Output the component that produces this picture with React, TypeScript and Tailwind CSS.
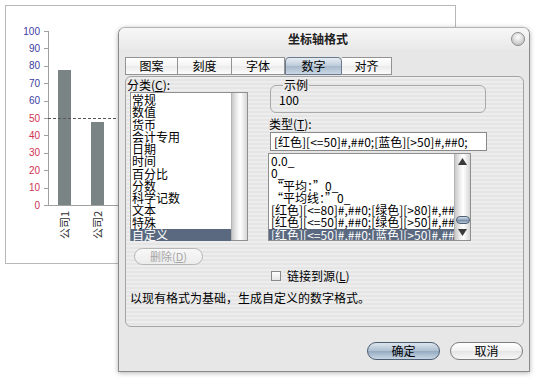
import React from "react";

const categories = ["常规", "数值", "货币", "会计专用", "日期", "时间", "百分比", "分数", "科学记数", "文本", "特殊", "自定义"];

const formats = [
  "0.0_",
  "0_",
  "“平均：”0_",
  "“平均线：”0_",
  "[红色][<=80]#,##0;[绿色][>80]#,##0;",
  "[红色][<=50]#,##0;[绿色][>50]#,##0;",
  "[红色][<=50]#,##0;[蓝色][>50]#,##0;",
];

const tabs = [
  { label: "图案", w: "w-[53px]" },
  { label: "刻度", w: "w-[54px]" },
  { label: "字体", w: "w-[53px]" },
  { label: "数字", w: "w-[57px]", active: true },
  { label: "对齐", w: "w-[50px]" },
];

function Chart() {
  const ticks = [100, 90, 80, 70, 60, 50, 40, 30, 20, 10, 0];
  // 坐标：页面坐标减去 6
  const y = (v: number) => 199 - v * 1.74;
  return (
    <svg width="449" height="257" className="block">
      <line x1="42.5" y1="25" x2="42.5" y2="199" stroke="#a0a0a0" />
      <line x1="42" y1="199.5" x2="130" y2="199.5" stroke="#a0a0a0" />
      {ticks.map((v) => (
        <g key={v}>
          <line x1="38" x2="42" y1={Math.round(y(v)) + 0.5} y2={Math.round(y(v)) + 0.5} stroke="#a0a0a0" />
          <text
            x="34"
            y={y(v) + 3.5}
            textAnchor="end"
            fontSize="10"
            fontFamily="'Liberation Sans', Arial, sans-serif"
            fill={v > 50 ? "#3c3ca2" : "#cf3352"}
          >
            {v}
          </text>
        </g>
      ))}
      <rect x="52" y="64" width="13" height="135" fill="#7b8484" />
      <rect x="85" y="116" width="13" height="83" fill="#7b8484" />
      <line x1="42" y1="112.5" x2="130" y2="112.5" stroke="#555" strokeDasharray="3 2" />
      <text
        transform="translate(63 205) rotate(-90)"
        textAnchor="end"
        fontSize="11"
        fontFamily="'Noto Sans CJK SC', sans-serif"
        fill="#333"
      >
        公司1
      </text>
      <text
        transform="translate(96 205) rotate(-90)"
        textAnchor="end"
        fontSize="11"
        fontFamily="'Noto Sans CJK SC', sans-serif"
        fill="#333"
      >
        公司2
      </text>
    </svg>
  );
}

function Track({ children }: { children?: React.ReactNode }) {
  return (
    <div className="w-[16px] h-full shrink-0 flex flex-col items-center border-l border-[#b4b4b4] bg-[linear-gradient(to_right,#c9c9c9,#efefef_35%,#ffffff_55%,#d6d6d6)]">
      {children}
    </div>
  );
}

export default function App() {
  return (
    <div className="relative w-[550px] h-[381px] overflow-hidden bg-white font-['Noto_Sans_CJK_SC',sans-serif] text-black">
      <div className="ml-[5px] mt-[5px] w-[451px] h-[259px] border border-[#b8b8b8] bg-white">
        <Chart />
      </div>

      <div className="absolute left-[118px] top-[27px] w-[412px] h-[345px] flex flex-col rounded-t-[7px] border border-[#8a8a8a] border-t-[#b4b4b4] bg-[#e7e7e7] shadow-[0_1px_5px_rgba(0,0,0,0.3)]">
        {/* 标题栏 */}
        <div className="h-[21px] flex items-center rounded-t-[6px] bg-[linear-gradient(to_bottom,#f7f7f7,#e9e9e9)]">
          <div className="flex-1 flex justify-center pl-[6px] text-[12px] leading-[14px] font-bold text-[#222]">坐标轴格式</div>
          <div className="mr-[4px] w-[14px] h-[14px] rounded-full border border-[#8c8c8c] bg-[radial-gradient(circle_at_50%_35%,#ffffff,#d2d2d2_60%,#b4b4b4)]" />
        </div>

        <div className="flex flex-col pl-[6px] pt-[8px]">
          {/* 选项卡 */}
          <div className="flex h-[18px] text-[12px] leading-[16px]">
            {tabs.map((t, i) =>
              t.active ? (
                <div
                  key={t.label}
                  className={`${t.w} flex items-center justify-center rounded-t-[4px] border border-[#6a7a8c] bg-[linear-gradient(to_bottom,#e6edf4,#bccad8_50%,#a6b8ca_51%,#cbd8e4)]`}
                >
                  {t.label}
                </div>
              ) : (
                <div
                  key={t.label}
                  className={`${t.w} flex items-center justify-center border-y border-r border-[#939393] ${i === 0 ? "border-l" : ""} bg-[linear-gradient(to_bottom,#ffffff,#f4f4f4_50%,#ebebeb_51%,#fbfbfb)]`}
                >
                  {t.label}
                </div>
              )
            )}
          </div>

          {/* 面板 */}
          <div className="mt-px w-[399px] h-[251px] flex flex-col rounded-[6px] border border-[#a4a4a4] bg-[repeating-linear-gradient(to_bottom,#ededed_0px,#ededed_2px,#e5e5e5_2px,#e5e5e5_4px)] text-[12px]">
            <div className="flex">
              {/* 分类 */}
              <div className="flex flex-col pl-[1px] pt-[1px] w-[122px]">
                <div className="leading-[13px]">
                  分类(<span className="underline">C</span>):
                </div>
                <div className="ml-[3px] mt-[1px] w-[118px] h-[149px] flex border border-[#8f8f8f] bg-white">
                  <div className="flex-1 flex flex-col pt-[1px]">
                    {categories.map((c, i) => (
                      <div
                        key={c}
                        className={`leading-[12.25px] h-[12.25px] pl-px whitespace-nowrap ${i === categories.length - 1 ? "bg-[#5a6980] text-white" : ""}`}
                      >
                        {c}
                      </div>
                    ))}
                  </div>
                  <Track />
                </div>
              </div>

              {/* 右侧 */}
              <div className="ml-[22px] flex flex-col">
                <fieldset className="mt-[2px] w-[216px] h-[34px] rounded-[6px] border border-[#a9a9a9] pl-[8px]">
                  <legend className="ml-[4px] px-px leading-[12px]">示例</legend>
                  <div className="leading-[13px] pt-[2px]">100</div>
                </fieldset>
                <div className="mt-[4px] -ml-[1px] leading-[13px]">
                  类型(<span className="underline">T</span>):
                </div>
                <div className="mt-[2px] w-[217px] h-[19px] pl-[3px] flex items-center border border-[#8a8a8a] bg-white whitespace-nowrap overflow-hidden">
                  [红色][&lt;=50]#,##0;[蓝色][&gt;50]#,##0;
                </div>
                <div className="mt-[2px] -ml-[2px] w-[203px] h-[88px] flex border border-[#8f8f8f] bg-white">
                  <div className="flex-1 min-w-0 flex flex-col pt-px overflow-hidden">
                    {formats.map((f, i) => (
                      <div
                        key={i}
                        className={`leading-[12.25px] h-[12.25px] pl-[2px] whitespace-nowrap ${i === formats.length - 1 ? "bg-[#5a6980] text-white" : ""}`}
                      >
                        {f}
                      </div>
                    ))}
                  </div>
                  <Track>
                    <svg width="9" height="7" className="mt-[4px]">
                      <polygon points="4.5,0 9,7 0,7" fill="#3a3a3a" />
                    </svg>
                    <div className="flex-1" />
                    <div className="w-[14px] h-[8px] rounded-full border border-[#4f6078] bg-[linear-gradient(to_bottom,#d4dee8,#8ea3ba_50%,#6f86a0_51%,#b8c8d8)]" />
                    <div className="h-[5px]" />
                    <svg width="9" height="7" className="mb-[4px]">
                      <polygon points="0,0 9,0 4.5,7" fill="#3a3a3a" />
                    </svg>
                  </Track>
                </div>
              </div>
            </div>

            <div className="ml-[8px] mt-[7px] w-[69px] h-[17px] flex items-center justify-center rounded-full border border-[#b6b6b6] bg-[linear-gradient(to_bottom,#f8f8f8,#ececec)] text-[11px] leading-[13px] text-[#a6a6a6]">
              删除(<span className="underline">D</span>)
            </div>

            <div className="mt-[4px] ml-[145px] flex items-center h-[13px] leading-[13px]">
              <div className="w-[10px] h-[10px] border border-[#8a8a8a] bg-[linear-gradient(to_bottom,#ffffff,#e6e6e6)]" />
              <span className="ml-[6px]">
                链接到源(<span className="underline">L</span>)
              </span>
            </div>

            <div className="mt-[9px] ml-[4px] leading-[13px] whitespace-nowrap">以现有格式为基础，生成自定义的数字格式。</div>
          </div>
        </div>

        {/* 按钮 */}
        <div className="mt-[15px] flex justify-end gap-[10px] pr-[6px] text-[12px]">
          <div className="w-[73px] h-[18px] flex items-center justify-center rounded-full border border-[#4d5d72] bg-[linear-gradient(to_bottom,#dbe5ee,#aebfd0_50%,#94aac0_51%,#c8d7e5)] leading-[14px]">
            确定
          </div>
          <div className="w-[73px] h-[18px] flex items-center justify-center rounded-full border border-[#7d7d7d] bg-[linear-gradient(to_bottom,#ffffff,#f1f1f1_50%,#e4e4e4_51%,#f7f7f7)] leading-[14px]">
            取消
          </div>
        </div>
      </div>
    </div>
  );
}
